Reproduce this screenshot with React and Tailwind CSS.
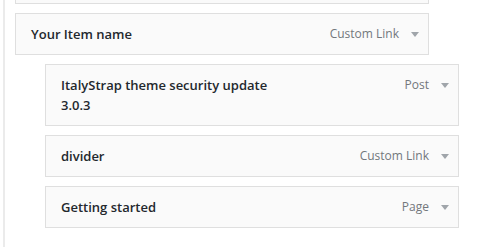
import React from "react";

const items = [
  { title: "Your Item name", type: "Custom Link", depth: 0 },
  { title: "ItalyStrap theme security update 3.0.3", type: "Post", depth: 1 },
  { title: "divider", type: "Custom Link", depth: 1 },
  { title: "Getting started", type: "Page", depth: 1 },
];

// little grey arrow on the right of each bar
const Arrow = () => (
  <svg width="8" height="5" viewBox="0 0 8 5" className="block">
    <path d="M0 0 L8 0 L4 5 Z" fill="#a0a5aa" />
  </svg>
);

const MenuItem = ({ title, type, depth }) => (
  <div className={depth ? "mt-[9px] ml-[30px]" : "mt-[9px]"}>
    <div className="w-[414px] flex items-start border border-[#dfdfdf] bg-[#fafafa] pl-[15px] py-[10px] leading-[20px]">
      <span className="w-[215px] shrink-0 text-[13px] font-semibold text-[#23282d]">{title}</span>
      <span className="ml-auto text-[12px] text-[#72777c] whitespace-nowrap">{type}</span>
      <span className="h-[20px] flex items-center ml-[12px] mr-[9px]">
        <Arrow />
      </span>
    </div>
  </div>
);

const App = () => {
  return (
    <div
      className="w-[488px] h-[247px] bg-white flex overflow-hidden"
      style={{ fontFamily: '"Open Sans", "Liberation Sans", sans-serif' }}
    >
      {/* left edge line */}
      <div className="ml-[3px] w-[2px] h-full bg-[#ebebeb]"></div>

      <div className="ml-[10px]">
        {/* previous item, cut off at the top */}
        <div className="w-[414px] h-[4px] border border-t-0 border-[#dfdfdf] bg-[#fafafa]"></div>

        {items.map((item, i) => (
          <MenuItem key={i} {...item} />
        ))}
      </div>
    </div>
  );
};

export default App;
